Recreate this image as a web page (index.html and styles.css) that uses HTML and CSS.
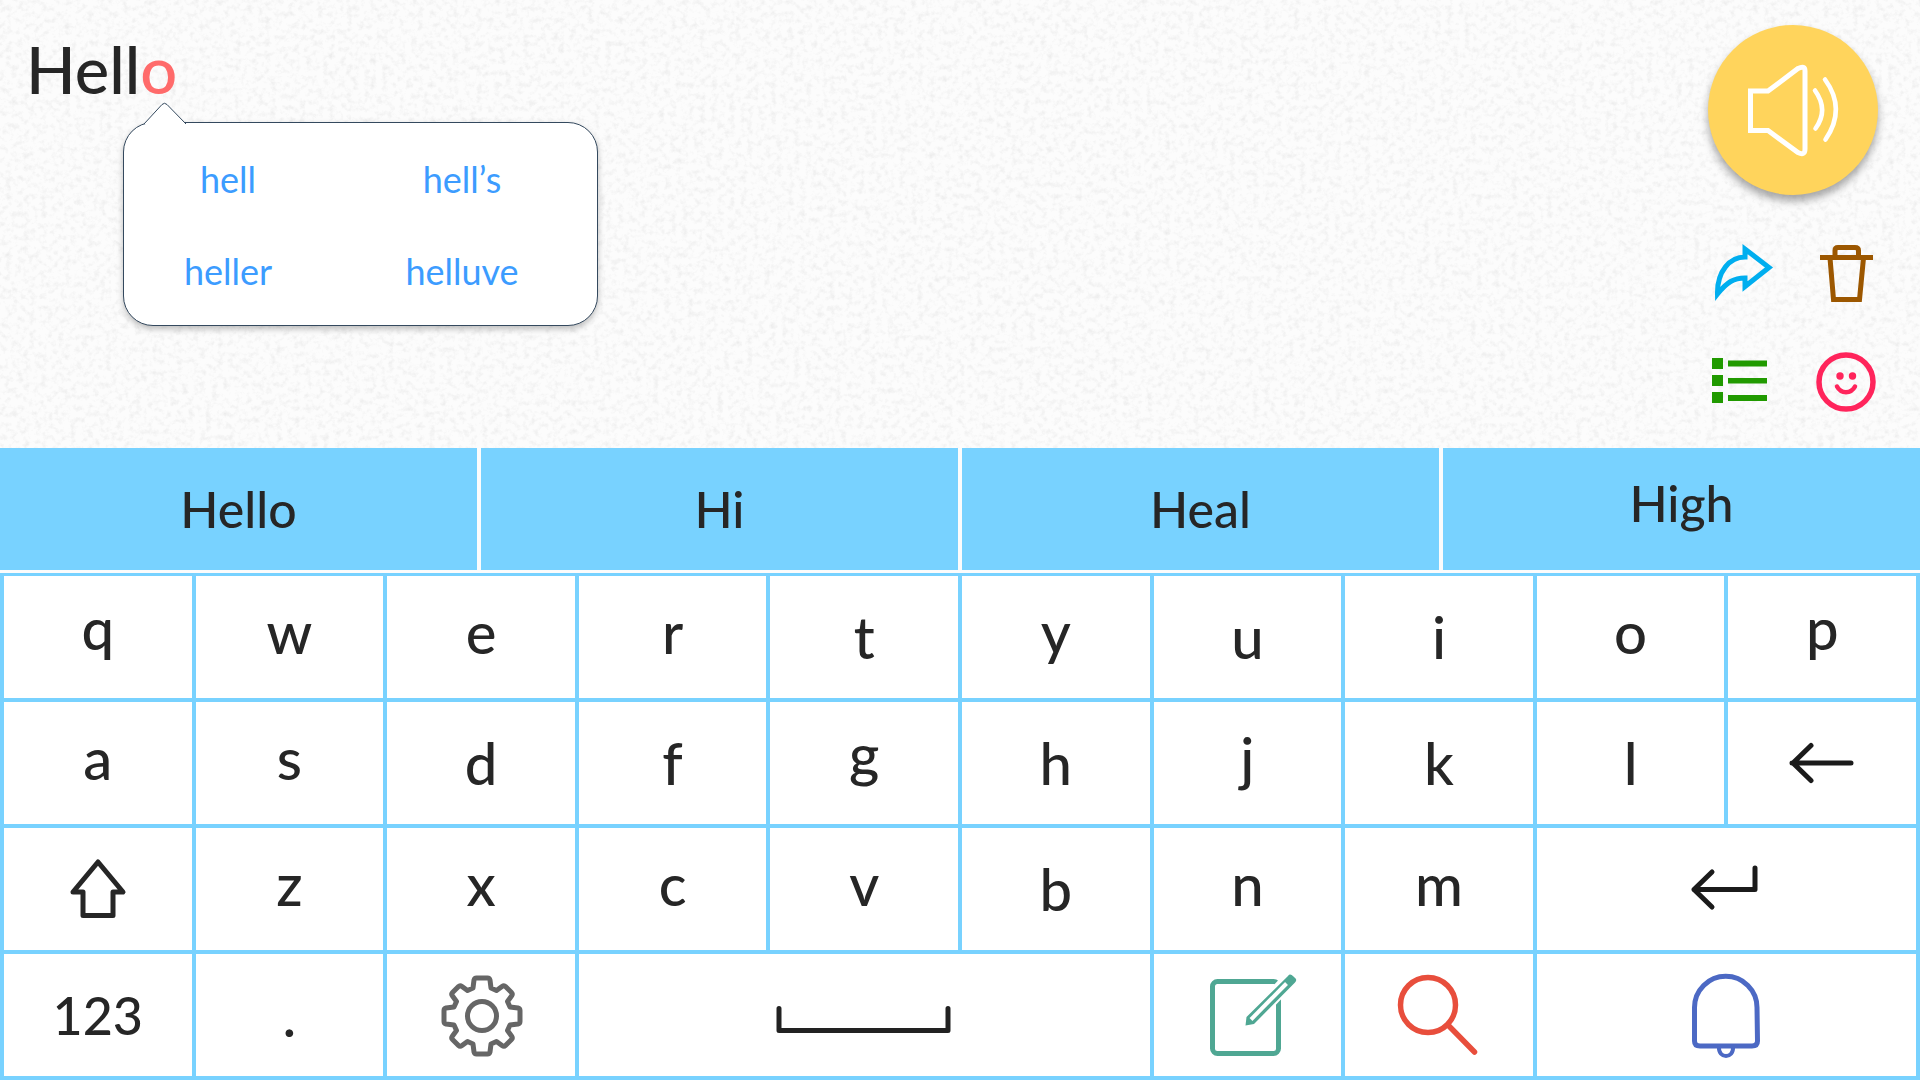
FILE: index.html
```html
<!DOCTYPE html>
<html lang="en">
<head>
<meta charset="utf-8">
<meta name="viewport" content="width=device-width, initial-scale=1">
<title>Speak</title>
<link rel="stylesheet" href="styles.css">
</head>
<body>
<main class="app">
  <section class="composer">
    <svg class="paper" aria-hidden="true">
      <filter id="grain" x="0" y="0" width="100%" height="100%">
        <feTurbulence type="fractalNoise" baseFrequency="0.17" numOctaves="4" seed="11"/>
        <feColorMatrix type="matrix" values="0 0 0 0 0.5  0 0 0 0 0.5  0 0 0 0 0.5  0.5 0 0 0 -0.23"/>
      </filter>
      <rect width="100%" height="100%" filter="url(#grain)"/>
    </svg>
    <div class="message">
      <div class="message-text" role="textbox" aria-label="Message" contenteditable="true" spellcheck="false">Hell<span class="typo">o</span></div>
      <div class="popup">
        <svg class="popup-tip" viewBox="0 0 42 22" aria-hidden="true"><path d="M0 22 18 2.500Q20.500 0 23 2.500L42 22" fill="#fff" stroke="#34495e"/></svg>
        <button class="fix">hell</button>
        <button class="fix">hell’s</button>
        <button class="fix">heller</button>
        <button class="fix">helluve</button>
      </div>
    </div>
    <div class="actions">
      <button class="speak" aria-label="Speak">
        <svg width="170" height="170" viewBox="0 0 170 170" fill="none" stroke="#fff" stroke-width="5"><path d="M42.500 66H60L90 43.500Q97 40 97 46V124Q97 131 90 127.500L60 105.500H42.500Z"/><path stroke-linecap="round" stroke-width="4.600" d="M107 65.500Q121 85 107.500 103.500M117 54.500Q138.500 84 117.500 114.500"/></svg>
      </button>
      <button class="tool" aria-label="Share">
        <svg width="60" height="60" viewBox="0 0 60 60" fill="none" stroke="#00aeef" stroke-width="5"><path d="M6.500 51C6 28 19 14 34 14V6L58 24.500 34 43.500V35C23 35 16 39 6.500 51Z"/></svg>
      </button>
      <button class="tool" aria-label="Delete">
        <svg width="60" height="60" viewBox="0 0 60 60" fill="none" stroke="#9c5700" stroke-width="5"><path d="M5 14.500H58M20 14V7.500Q20 4.500 23 4.500H40Q43.500 4.500 43.500 7.500V14M15 15 18.500 56.500H44.500L48.500 15"/></svg>
      </button>
      <button class="tool" aria-label="Phrases">
        <svg width="60" height="60" viewBox="0 0 60 60" fill="#219a00"><path d="M1 7h11v11H1zM1 24h11v11H1zM1 41h11v11H1zM17 9.500h39v6H17zM17 27h39v5.500H17zM17 44h39v6H17z"/></svg>
      </button>
      <button class="tool" aria-label="Emoji">
        <svg width="60" height="60" viewBox="0 0 60 60" fill="none" stroke="#ff245b"><circle cx="31" cy="31" r="27" stroke-width="5.500"/><circle cx="25" cy="25" r="3.700" fill="#ff245b" stroke="none"/><circle cx="37.500" cy="25" r="3.700" fill="#ff245b" stroke="none"/><path stroke-width="4.500" stroke-linecap="round" d="M22 35.500C26 43 36 43 40 35.500"/></svg>
      </button>
    </div>
  </section>

  <section class="suggestions" aria-label="Suggestions">
    <button class="suggestion">Hello</button>
    <button class="suggestion">Hi</button>
    <button class="suggestion">Heal</button>
    <button class="suggestion raised">High</button>
  </section>

  <section class="keyboard" aria-label="Keyboard">
    <button class="key deep">q</button>
    <button class="key">w</button>
    <button class="key">e</button>
    <button class="key">r</button>
    <button class="key tall">t</button>
    <button class="key">y</button>
    <button class="key tall">u</button>
    <button class="key tall">i</button>
    <button class="key">o</button>
    <button class="key deep">p</button>

    <button class="key">a</button>
    <button class="key">s</button>
    <button class="key tall">d</button>
    <button class="key tall">f</button>
    <button class="key deep">g</button>
    <button class="key tall">h</button>
    <button class="key">j</button>
    <button class="key tall">k</button>
    <button class="key tall">l</button>
    <button class="key" aria-label="Backspace">
      <svg width="64" height="44" viewBox="0 0 64 44" fill="none" stroke="#1b1b1b" stroke-width="5" stroke-linecap="round"><path d="M61 22H2M21 4.500 3 22 21 39.500"/></svg>
    </button>

    <button class="key" aria-label="Shift">
      <svg width="58" height="62" viewBox="0 1 58 62" fill="none" stroke="#262626" stroke-width="5" stroke-linejoin="round"><path d="M29 5 54 35H44V58.500H14V35H4Z"/></svg>
    </button>
    <button class="key">z</button>
    <button class="key">x</button>
    <button class="key">c</button>
    <button class="key">v</button>
    <button class="key tall">b</button>
    <button class="key">n</button>
    <button class="key">m</button>
    <button class="key wide-2" aria-label="Enter">
      <svg width="68" height="44" viewBox="2 2 68 44" fill="none" stroke="#1b1b1b" stroke-width="5" stroke-linecap="round" stroke-linejoin="round"><path d="M65 3V24.500H4M22 7 4 24.500 22 42"/></svg>
    </button>

    <button class="key digits">123</button>
    <button class="key tall">.</button>
    <button class="key" aria-label="Settings">
      <svg width="82" height="82" viewBox="-42 -42 82 82" fill="none" stroke="#666" stroke-width="5" stroke-linejoin="round"><circle r="14.500"/><path d="M-8 -36Q-7.500 -38 -5.500 -38H5.500Q7.500 -38 8 -36L9 -28 14.500 -25.500 20 -29.500Q22 -31 23.500 -29.500L29.500 -23.500Q31 -22 29.500 -20L25.500 -14.500 28 -9 36 -8Q38 -7.500 38 -5.500V5.500Q38 7.500 36 8L28 9 25.500 14.500 29.500 20Q31 22 29.500 23.500L23.500 29.500Q22 31 20 29.500L14.500 25.500 9 28 8 36Q7.500 38 5.500 38H-5.500Q-7.500 38 -8 36L-9 28 -14.500 25.500 -20 29.500Q-22 31 -23.500 29.500L-29.500 23.500Q-31 22 -29.500 20L-25.500 14.500 -28 9 -36 8Q-38 7.500 -38 5.500V-5.500Q-38 -7.500 -36 -8L-28 -9 -25.500 -14.500 -29.500 -20Q-31 -22 -29.500 -23.500L-23.500 -29.500Q-22 -31 -20 -29.500L-14.500 -25.500 -9 -28Z"/></svg>
    </button>
    <button class="key wide-3" aria-label="Space">
      <svg width="180" height="82" viewBox="1 0 180 82" fill="none" stroke="#222" stroke-width="5" stroke-linecap="round" stroke-linejoin="round"><path d="M6 34.500V56.500H175V34.500"/></svg>
    </button>
    <button class="key" aria-label="Write a note">
      <svg width="90" height="82" viewBox="-6 -2 90 82" fill="none" stroke="#4fa793" stroke-width="5"><rect x="4.500" y="5.500" width="66" height="72" rx="5"/><path stroke="#fff" stroke-width="15" d="M80 5 44 43"/><path fill="#4fa793" stroke="none" d="M37.500 49.500 38.500 41 80 0Q82 -3 85.500 .500Q90 4 87 6.500L46 48Z"/><path stroke="#fff" stroke-width="4" d="M43 43.500 78.500 7.500"/></svg>
    </button>
    <button class="key" aria-label="Search">
      <svg width="82" height="82" viewBox="2 0 82 82" fill="none" stroke="#e84e3c" stroke-width="5.500"><circle cx="32" cy="31" r="27.500"/><path stroke-linecap="round" d="M52 51 78.500 78"/></svg>
    </button>
    <button class="key wide-2" aria-label="Alert">
      <svg width="70" height="86" viewBox="-1 -2 70 86" fill="none" stroke="#4c69c4" stroke-width="5"><path d="M2.500 33.500A31 31 0 0 1 65 33.500L65.500 67Q65.500 72 60 72H8Q2.500 72 2.500 67Z"/><path stroke-width="4" d="M27 73C26 85 42 85 41 73"/></svg>
    </button>
  </section>
</main>
</body>
</html>
```
FILE: styles.css
```css
* {
  box-sizing: border-box;
}

body {
  margin: 0;
  background: #fcfcfc;
  color: #262626;
  font-family: Lato, "Open Sans", sans-serif;
}

button {
  margin: 0;
  padding: 0;
  border: 0;
  background: none;
  color: inherit;
  font: inherit;
  cursor: pointer;
}

svg {
  display: block;
  overflow: visible;
}

.app {
  display: grid;
  grid-template-rows: 1fr auto auto;
  min-height: 100vh;
}

.composer {
  position: relative;
  display: flex;
  justify-content: space-between;
  padding: 25px 42px 31px 26px;
}

.paper {
  position: absolute;
  inset: 0;
  width: 100%;
  height: 100%;
}

.message {
  position: relative;
  flex: 1;
}

.message-text {
  font-size: 65px;
  font-weight: 500;
  line-height: 88px;
  outline: 0;
}

.typo {
  color: #ff6b6b;
}

.popup {
  position: absolute;
  top: 97px;
  left: 97px;
  display: grid;
  grid-template-columns: 208px 208px;
  gap: 4px 26px;
  width: 475px;
  padding: 12px 0 10px;
  border: 1px solid #34495e;
  border-radius: 30px;
  background: #fff;
  box-shadow: 0 3px 6px rgba(0, 0, 0, 0.25);
}

.popup-tip {
  position: absolute;
  top: -21px;
  left: 20px;
  width: 42px;
  height: 22px;
}

.fix {
  height: 88px;
  color: #3c9cff;
  font-size: 36px;
}

.actions {
  position: relative;
  display: grid;
  grid-template-columns: 60px 60px;
  grid-template-rows: 170px;
  grid-auto-rows: 60px;
  gap: 48px 44px;
  justify-content: center;
  width: 170px;
}

.speak {
  grid-column: span 2;
  justify-self: center;
  width: 170px;
  height: 170px;
  border-radius: 50%;
  background: #ffd45c;
  box-shadow: 0 6px 8px rgba(0, 0, 0, 0.35);
}

.suggestions {
  display: grid;
  grid-template-columns: repeat(4, 1fr);
  gap: 4px;
  margin-bottom: 3px;
}

.suggestion {
  height: 122px;
  background: #78d2ff;
  font-size: 50px;
  font-weight: 500;
}

.raised {
  padding-bottom: 12px;
}

.keyboard {
  display: grid;
  grid-template-columns: repeat(10, 1fr);
  grid-auto-rows: 122px;
  gap: 4px;
  padding: 3px 4px 4px;
  background: #78d2ff;
}

.key {
  display: flex;
  align-items: center;
  justify-content: center;
  min-width: 0;
  padding-bottom: 12px;
  background: #fff;
  font-size: 58px;
  font-weight: 500;
}

.key:has(svg) {
  padding-bottom: 0;
}

.tall {
  padding-bottom: 2px;
}

.deep {
  padding-bottom: 20px;
}

.digits {
  padding-bottom: 0;
  font-size: 52px;
}

.wide-2 {
  grid-column: span 2;
}

.wide-3 {
  grid-column: span 3;
}
```
